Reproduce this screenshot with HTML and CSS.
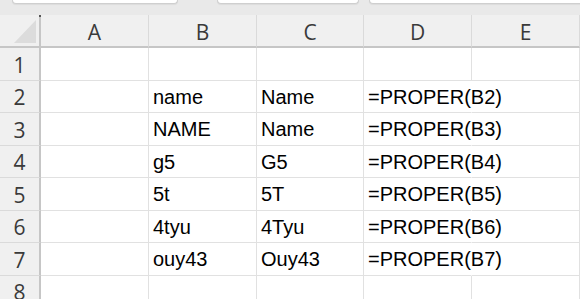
FILE: index.html
```html
<!DOCTYPE html>
<html lang="en">
<head>
    <meta charset="UTF-8">
    <meta name="viewport" content="width=device-width, initial-scale=1.0">
    <title>PROPER</title>
    <link rel="stylesheet" href="styles.css">
</head>
<body>
    <div class="topbar">
        <div class="tab tab-one"></div>
        <div class="tab tab-two"></div>
        <div class="tab tab-three"></div>
    </div>
    <div class="sheet">
        <div class="corner"><span class="dot"></span><span class="select-all"></span></div>
        <div class="col-head">A</div>
        <div class="col-head">B</div>
        <div class="col-head">C</div>
        <div class="col-head">D</div>
        <div class="col-head">E</div>

        <div class="row-head">1</div>
        <div class="cell"></div><div class="cell"></div><div class="cell"></div><div class="cell"></div><div class="cell"></div>

        <div class="row-head">2</div>
        <div class="cell"></div><div class="cell">name</div><div class="cell">Name</div><div class="cell formula">=PROPER(B2)</div><div class="cell"></div>

        <div class="row-head">3</div>
        <div class="cell"></div><div class="cell">NAME</div><div class="cell">Name</div><div class="cell formula">=PROPER(B3)</div><div class="cell"></div>

        <div class="row-head">4</div>
        <div class="cell"></div><div class="cell">g5</div><div class="cell">G5</div><div class="cell formula">=PROPER(B4)</div><div class="cell"></div>

        <div class="row-head">5</div>
        <div class="cell"></div><div class="cell">5t</div><div class="cell">5T</div><div class="cell formula">=PROPER(B5)</div><div class="cell"></div>

        <div class="row-head">6</div>
        <div class="cell"></div><div class="cell">4tyu</div><div class="cell">4Tyu</div><div class="cell formula">=PROPER(B6)</div><div class="cell"></div>

        <div class="row-head">7</div>
        <div class="cell"></div><div class="cell">ouy43</div><div class="cell">Ouy43</div><div class="cell formula">=PROPER(B7)</div><div class="cell"></div>

        <div class="row-head last">8</div>
        <div class="cell"></div><div class="cell"></div><div class="cell"></div><div class="cell"></div><div class="cell"></div>
    </div>
</body>
</html>
```

FILE: styles.css
```css
* {
    box-sizing: border-box;
}
body {
    margin: 0;
    padding: 0;
    background-color: #fff;
    font-family: "Liberation Sans", Arial, sans-serif;
    overflow: hidden;
}
.topbar {
    height: 15px;
    background-color: #e9e9e9;
    display: flex;
    align-items: flex-start;
}
.tab {
    height: 4px;
    background: #fff;
    border: 1px solid #cfcfcf;
    border-top: none;
    border-radius: 0 0 5px 5px;
    box-shadow: 0 1px 1px rgba(0, 0, 0, 0.06);
}
.tab-one {
    margin-left: 12px;
    width: 166px;
}
.tab-two {
    margin-left: 39px;
    width: 142px;
}
.tab-three {
    margin-left: 10px;
    flex: 1;
    margin-right: -10px;
}
.sheet {
    display: grid;
    grid-template-columns: 41px 108px 108px 107px 108px 1fr;
    grid-template-rows: 33px;
    grid-auto-rows: 32.5px;
}
.corner {
    background-color: #f0f0f0;
    border-right: 2px solid #c6c6c6;
    border-bottom: 2px solid #c6c6c6;
    display: flex;
    justify-content: flex-end;
    align-items: flex-end;
    padding: 0 3px 3px 0;
    position: relative;
}
.corner .dot {
    position: absolute;
    top: 0;
    right: -2px;
    width: 2px;
    height: 2px;
    background: #555;
}
.select-all {
    width: 0;
    height: 0;
    border-left: 22px solid transparent;
    border-bottom: 23px solid #dcdcdc;
}
.col-head {
    background-color: #f0f0f0;
    border-right: 1px solid #dadada;
    border-bottom: 2px solid #c6c6c6;
    font-family: "Open Sans", "Noto Sans", sans-serif;
    font-size: 21px;
    color: #3a3a3a;
    display: flex;
    justify-content: center;
    align-items: center;
    padding-top: 3px;
}
.row-head {
    background-color: #f0f0f0;
    border-right: 2px solid #c6c6c6;
    border-bottom: 1px solid #dadada;
    font-family: "Open Sans", "Noto Sans", sans-serif;
    font-size: 21px;
    color: #3a3a3a;
    display: flex;
    justify-content: center;
    align-items: center;
    padding-top: 2px;
}
.row-head.last {
    align-items: flex-start;
    padding-top: 4px;
    line-height: 1.2;
}
.cell {
    border-right: 1px solid #e1e1e1;
    border-bottom: 1px solid #e1e1e1;
    font-size: 20px;
    color: #000;
    padding: 2px 0 0 4px;
    display: flex;
    align-items: center;
    white-space: nowrap;
}
.cell.formula {
    border-right-color: transparent;
}
```
